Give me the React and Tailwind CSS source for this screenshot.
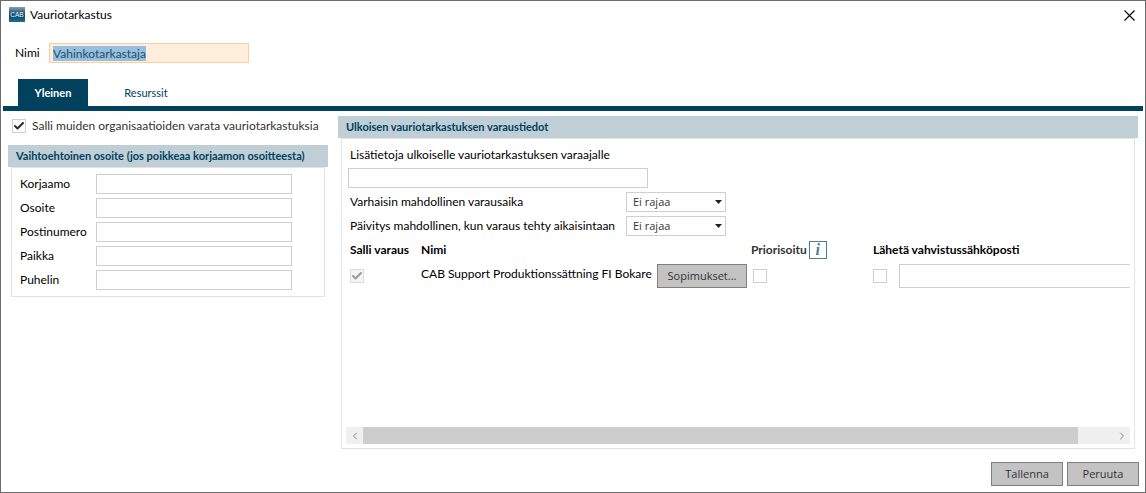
import { useEffect, useRef } from 'react';
import { Check, ChevronLeft, ChevronRight } from 'lucide-react';

const ADDRESS_FIELDS = [
  { id: 'workshop', label: 'Korjaamo' },
  { id: 'street', label: 'Osoite' },
  { id: 'zip', label: 'Postinumero' },
  { id: 'city', label: 'Paikka' },
  { id: 'phone', label: 'Puhelin' },
];

const LIMIT_FIELDS = [
  { id: 'earliest', label: 'Varhaisin mahdollinen varausaika' },
  { id: 'update', label: 'Päivitys mahdollinen, kun varaus tehty aikaisintaan' },
];

export default function App() {
  const nameRef = useRef(null);

  // Name is preselected when the dialog opens
  useEffect(() => {
    nameRef.current.focus();
    nameRef.current.select();
  }, []);

  return (
    <div className="flex min-h-screen flex-col border border-[#6b6b6b] bg-white font-['Lato',sans-serif] text-[12px] leading-4 text-black">
      {/* Title bar */}
      <header className="flex h-7 items-center gap-[5px] pr-2 pl-2">
        <CabLogo />
        <h1 className="flex-1">Vauriotarkastus</h1>
        <button aria-label="Sulje" className="flex h-4 w-4 items-center justify-center">
          <svg width="11" height="11" viewBox="0 0 11 11" stroke="#000" strokeWidth="1.1">
            <path d="M.5.5l10 10M10.500.5l-10 10" />
          </svg>
        </button>
      </header>

      <div className="mt-3.5 flex items-center pl-3.5">
        <label htmlFor="name" className="w-[34px]">Nimi</label>
        <input
          id="name"
          ref={nameRef}
          defaultValue="Vahinkotarkastaja"
          className="h-5 w-[200px] border border-[#fbcf9b] bg-[#ffeedd] px-[3px] text-[#1f4e6e] outline-none selection:bg-[#98bfdd] selection:text-[#1f4e6e]"
        />
      </div>

      {/* Tabs */}
      <nav role="tablist" className="mx-0.5 mt-4 flex h-8 border-b-5 border-[#00415d] pl-[15px] text-[11px] text-[#00415d]">
        <button role="tab" aria-selected="true" className="w-[70px] bg-[#00415d] font-bold text-white">
          Yleinen
        </button>
        <button role="tab" aria-selected="false" className="ml-5 w-[76px]">
          Resurssit
        </button>
      </nav>

      <main className="flex flex-1 gap-2.5 pt-[5px] pr-[7px] pl-[7px]">
        <section className="w-80 shrink-0">
          <label className="flex h-5 items-center gap-1.5 pl-1 text-[#333]">
            <CheckBox defaultChecked />
            Salli muiden organisaatioiden varata vauriotarkastuksia
          </label>

          <PanelTitle className="mt-[9px]">Vaihtoehtoinen osoite (jos poikkeaa korjaamon osoitteesta)</PanelTitle>
          <div className="mx-[3px] flex flex-col gap-1 border border-[#dde5ea] pt-1.5 pr-8 pb-1.5 pl-2">
            {ADDRESS_FIELDS.map((field) => (
              <div key={field.id} className="flex items-center">
                <label htmlFor={field.id} className="w-[76px]">{field.label}</label>
                <TextInput id={field.id} className="h-5 min-w-0 flex-1" />
              </div>
            ))}
          </div>
        </section>

        <section className="flex min-w-0 flex-1 flex-col">
          <PanelTitle>Ulkoisen vauriotarkastuksen varaustiedot</PanelTitle>
          <div className="mx-[3px] flex flex-1 flex-col border border-[#dde5ea] px-1 pt-2 pb-1">
            <div className="flex flex-col gap-1 px-0.5">
              <label htmlFor="info" className="mb-px pl-0.5">
                Lisätietoja ulkoiselle vauriotarkastuksen varaajalle
              </label>
              <TextInput id="info" className="h-5 w-[300px]" />
              {LIMIT_FIELDS.map((field) => (
                <div key={field.id} className="flex items-center pl-0.5">
                  <label htmlFor={field.id} className="w-[276px] whitespace-nowrap">{field.label}</label>
                  <LimitSelect id={field.id} />
                </div>
              ))}
            </div>

            <div className="mt-1 flex-1 overflow-hidden pl-1">
              <table className="w-full table-fixed text-left">
                <colgroup>
                  <col className="w-[71px]" />
                  <col className="w-[236px]" />
                  <col className="w-[94px]" />
                  <col className="w-[122px]" />
                  <col className="w-[26px]" />
                  <col />
                </colgroup>
                <thead>
                  <tr className="h-5 whitespace-nowrap">
                    <th>Salli varaus</th>
                    <th>Nimi</th>
                    <th />
                    <th className="text-[#333]">
                      <span className="flex items-center gap-0.5">
                        Priorisoitu
                        <InfoButton />
                      </span>
                    </th>
                    <th colSpan={2}>Lähetä vahvistussähköposti</th>
                  </tr>
                </thead>
                <tbody>
                  <tr className="h-8">
                    <td><CheckBox defaultChecked disabled aria-label="Salli varaus" /></td>
                    <td className="pb-1 whitespace-nowrap">CAB Support Produktionssättning FI Bokare</td>
                    <td><PushButton className="w-[90px]">Sopimukset...</PushButton></td>
                    <td className="pl-0.5"><CheckBox aria-label="Priorisoitu" /></td>
                    <td><CheckBox aria-label="Lähetä vahvistussähköposti" /></td>
                    <td><TextInput aria-label="Sähköposti" className="block h-6 w-full border-r-0" /></td>
                  </tr>
                </tbody>
              </table>
            </div>

            {/* Horizontal scrollbar */}
            <div className="flex h-[17px] bg-[#f0f0f0] text-[#888]">
              <button aria-label="Vieritä vasemmalle" className="flex w-[17px] items-center justify-center">
                <ChevronLeft size={12} />
              </button>
              <div className="flex-1 pr-[35px]">
                <div className="h-full bg-[#cdcdcd]" />
              </div>
              <button aria-label="Vieritä oikealle" className="flex w-[17px] items-center justify-center">
                <ChevronRight size={12} />
              </button>
            </div>
          </div>
        </section>
      </main>

      <footer className="flex justify-end gap-1 pt-[13px] pr-1.5 pb-1.5">
        <PushButton className="w-[72px]">Tallenna</PushButton>
        <PushButton className="w-[72px]">Peruuta</PushButton>
      </footer>
    </div>
  );
}

function PanelTitle({ className = '', children }) {
  return (
    <h2 className={`h-[22px] bg-[#c0ced5] px-2 text-[11px] leading-[22px] font-bold whitespace-nowrap text-[#00415d] ${className}`}>
      {children}
    </h2>
  );
}

function TextInput({ className, ...props }) {
  return <input type="text" className={`border border-[#cfcfcf] bg-white px-1 outline-none ${className}`} {...props} />;
}

function CheckBox(props) {
  return (
    <span className="relative block h-[14px] w-[14px]">
      <input
        type="checkbox"
        className="peer block h-full w-full appearance-none border border-[#cfcfcf] bg-white disabled:border-[#dcdcdc] disabled:bg-[#f4f4f4]"
        {...props}
      />
      <Check
        size={12}
        strokeWidth={4}
        className="pointer-events-none absolute inset-px hidden text-[#2b2b2b] peer-checked:block peer-disabled:text-[#999]"
      />
    </span>
  );
}

function LimitSelect({ id }) {
  return (
    <span className="relative w-[100px]">
      <select
        id={id}
        className="block h-5 w-full appearance-none border border-[#cfcfcf] bg-white px-1.5 font-['Open_Sans',sans-serif] text-[11px] leading-4 text-[#333] outline-none"
      >
        <option>Ei rajaa</option>
      </select>
      <svg
        className="pointer-events-none absolute top-2 right-1"
        width="7"
        height="4"
        viewBox="0 0 7 4"
        fill="#222"
      >
        <path d="M0 0h7L3.500 4z" />
      </svg>
    </span>
  );
}

function PushButton({ className, children }) {
  return (
    <button
      className={`block h-6 border border-[#7f7f7f] bg-[#c3c3c3] font-['Open_Sans',sans-serif] text-[11px] text-[#333] ${className}`}
    >
      {children}
    </button>
  );
}

function InfoButton() {
  return (
    <button
      aria-label="Tietoja"
      className="flex h-[18px] w-[18px] items-center justify-center border border-[#4f7f95] bg-white font-['Liberation_Serif',serif] text-[16px] font-bold text-[#4f7f95] italic"
    >
      i
    </button>
  );
}

function CabLogo() {
  return (
    <svg width="16" height="16" viewBox="0 0 16 16">
      <defs>
        <linearGradient id="cab" x1="0" y1="0" x2="0" y2="1">
          <stop offset="0" stopColor="#8aa3b3" />
          <stop offset=".35" stopColor="#2b6081" />
          <stop offset=".6" stopColor="#0d4a6d" />
          <stop offset="1" stopColor="#1b6e91" />
        </linearGradient>
      </defs>
      <rect width="16" height="15" fill="url(#cab)" />
      <text x="8" y="10" textAnchor="middle" fontSize="6.5" fill="#f0f6f9" fontFamily="Liberation Sans, sans-serif">
        CAB
      </text>
    </svg>
  );
}
